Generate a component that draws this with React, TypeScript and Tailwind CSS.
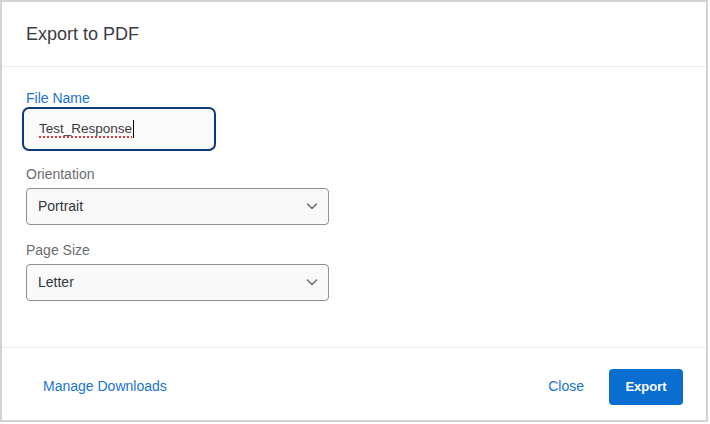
import React from "react";

const FONT = { fontFamily: '"Liberation Sans", Arial, sans-serif' };

function Chevron() {
  return (
    <svg width="12" height="7" viewBox="0 0 12 7" fill="none" className="shrink-0">
      <path d="M1.5 1l4.5 4.5 4.5-4.5" stroke="#5b5e62" strokeWidth="1.2" strokeLinecap="round" strokeLinejoin="round" />
    </svg>
  );
}

function SelectBox({ value }: { value: string }) {
  return (
    <div className="flex h-[37px] w-[303px] items-center justify-between rounded-[4px] border border-[#8d9196] bg-[#f9f9f9] pl-[11px] pr-[10px] text-[14px] text-[#32363a]">
      <span>{value}</span>
      <Chevron />
    </div>
  );
}

export default function App() {
  return (
    <div className="h-[424px] w-[710px] bg-white" style={FONT}>
      <div className="flex h-[422px] w-[708px] flex-col border-2 border-[#d3d3d3] bg-white">
        {/* header */}
        <div className="flex h-[65px] shrink-0 items-center border-b border-[#ebebeb] pl-[24px]">
          <h2 className="text-[18px] text-[#3a3d40]">Export to PDF</h2>
        </div>

        {/* body */}
        <div className="flex flex-1 flex-col items-start pl-[24px] pt-[22px]">
          <label className="text-[14px] leading-[18px] text-[#1a73d2]">File Name</label>
          <div className="ml-[-4px] flex h-[44px] w-[194px] items-center rounded-[7px] border-2 border-[#0e3a78] bg-[#fafafa] pl-[15px] text-[13.5px] text-[#3a3a3a]">
            <span className="underline decoration-[#e0302f] decoration-dotted decoration-[1.5px] underline-offset-[4px]">Test_Response</span>
            <span className="ml-px h-[18px] w-px bg-black" />
          </div>

          <label className="mt-[14px] text-[14px] leading-[18px] text-[#6a6d70]">Orientation</label>
          <div className="mt-[5px]">
            <SelectBox value="Portrait" />
          </div>

          <label className="mt-[16px] text-[14px] leading-[18px] text-[#6a6d70]">Page Size</label>
          <div className="mt-[5px]">
            <SelectBox value="Letter" />
          </div>
        </div>

        {/* footer */}
        <div className="flex h-[73px] shrink-0 items-center justify-between border-t border-[#ebebeb] pl-[41px] pr-[23px] pt-[5px]">
          <button className="text-[14px] text-[#1a73d2]">Manage Downloads</button>
          <div className="flex items-center gap-[25px]">
            <button className="text-[14px] text-[#1a73d2]">Close</button>
            <button className="h-[36px] w-[74px] rounded-[4px] bg-[#0a6ed1] text-[13px] font-bold text-white">Export</button>
          </div>
        </div>
      </div>
    </div>
  );
}
